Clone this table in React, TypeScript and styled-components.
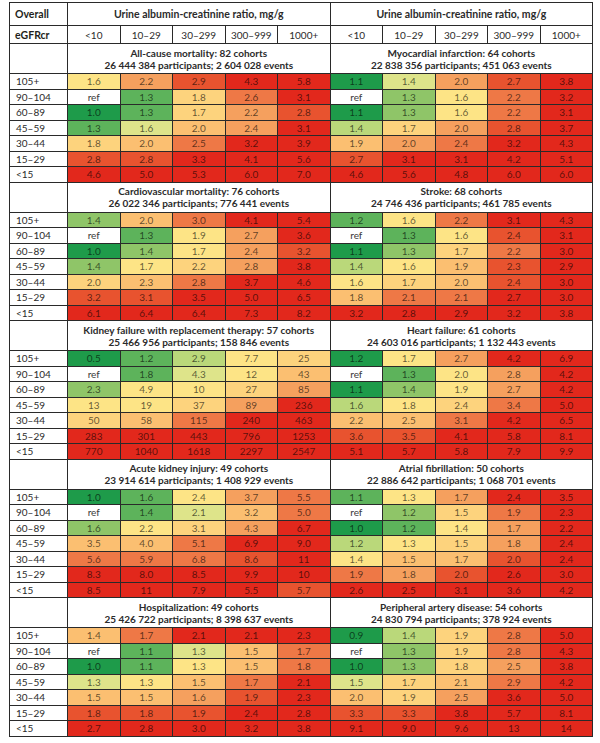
import React from 'react';
import styled, { createGlobalStyle } from 'styled-components';

const GlobalStyle = createGlobalStyle`
  html, body {
    margin: 0;
    padding: 0;
    background: #fff;
  }
  body {
    font-family: Lato, "Liberation Sans", Arial, sans-serif;
    color: #231f20;
  }
`;

// heat map classes, green -> red
const palette: Record<string, string> = {
  w: '#ffffff',
  g: '#1e9b4a',
  m: '#5db35b',
  n: '#8fc568',
  l: '#bad87a',
  k: '#dee48a',
  y: '#fde486',
  a: '#fdd37d',
  o: '#fbbf71',
  p: '#f5a05e',
  q: '#ee7846',
  s: '#e8532f',
  r: '#e2281c',
};

const bands = ['<10', '10–29', '30–299', '300–999', '1000+'];
const egfr = ['105+', '90–104', '60–89', '45–59', '30–44', '15–29', '<15'];

interface Block {
  title: string;
  sub: string;
  rows: string[];
}

const left: Block[] = [
  {
    title: 'All-cause mortality: 82 cohorts',
    sub: '26 444 384 participants; 2 604 028 events',
    rows: [
      '1.6y 2.2p 2.9s 4.3r 5.8r',
      'refw 1.3m 1.8a 2.6q 3.1r',
      '1.0g 1.3m 1.7a 2.2p 2.8s',
      '1.3m 1.6k 2.0o 2.4p 3.1r',
      '1.8a 2.0o 2.5q 3.2r 3.9r',
      '2.8s 2.8s 3.3r 4.1r 5.6r',
      '4.6r 5.0r 5.3r 6.0r 7.0r',
    ],
  },
  {
    title: 'Cardiovascular mortality: 76 cohorts',
    sub: '26 022 346 participants; 776 441 events',
    rows: [
      '1.4n 2.0o 3.0q 4.1r 5.4r',
      'refw 1.3m 1.9y 2.7p 3.6r',
      '1.0g 1.4n 1.7y 2.4p 3.2s',
      '1.4n 1.7y 2.2a 2.8p 3.8r',
      '2.0a 2.3o 2.8q 3.7r 4.6r',
      '3.2s 3.1s 3.5r 5.0r 6.5r',
      '6.1r 6.4r 6.4r 7.3r 8.2r',
    ],
  },
  {
    title: 'Kidney failure with replacement therapy: 57 cohorts',
    sub: '25 466 956 participants; 158 846 events',
    rows: [
      '0.5g 1.2m 2.9l 7.7y 25a',
      'refw 1.8m 4.3k 12y 43o',
      '2.3n 4.9y 10y 27a 85p',
      '13y 19y 37a 89p 236r',
      '50a 58o 115q 240r 463r',
      '283r 301r 443r 796r 1253r',
      '770r 1040r 1618r 2297r 2547r',
    ],
  },
  {
    title: 'Acute kidney injury: 49 cohorts',
    sub: '23 914 614 participants; 1 408 929 events',
    rows: [
      '1.0g 1.6m 2.4y 3.7p 5.5q',
      'refw 1.4m 2.1k 3.2o 5.0q',
      '1.6n 2.2y 3.1a 4.3p 6.7r',
      '3.5o 4.0o 5.1q 6.9r 9.0r',
      '5.6q 5.9q 6.8q 8.6s 11r',
      '8.3r 8.0r 8.5r 9.9r 10r',
      '8.5r 11r 7.9r 5.5r 5.7s',
    ],
  },
  {
    title: 'Hospitalization: 49 cohorts',
    sub: '25 426 722 participants; 8 398 637 events',
    rows: [
      '1.4o 1.7q 2.1r 2.1r 2.3r',
      'refw 1.1m 1.3k 1.5o 1.7q',
      '1.0g 1.1m 1.3y 1.5o 1.8q',
      '1.3k 1.3y 1.5o 1.7q 2.1r',
      '1.5o 1.5o 1.6p 1.9s 2.3r',
      '1.8s 1.8s 1.9s 2.4r 2.8r',
      '2.7r 2.8r 3.0r 3.2r 3.8r',
    ],
  },
];

const right: Block[] = [
  {
    title: 'Myocardial infarction: 64 cohorts',
    sub: '22 838 356 participants; 451 063 events',
    rows: [
      '1.1g 1.4k 2.0p 2.7s 3.8r',
      'refw 1.3n 1.6y 2.2q 3.2r',
      '1.1g 1.3n 1.6y 2.2q 3.1r',
      '1.4l 1.7a 2.0p 2.8s 3.7r',
      '1.9o 2.0p 2.4q 3.2r 4.3r',
      '2.7s 3.1r 3.1r 4.2r 5.1r',
      '4.6r 5.6r 4.8r 6.0r 6.0r',
    ],
  },
  {
    title: 'Stroke: 68 cohorts',
    sub: '24 746 436 participants; 461 785 events',
    rows: [
      '1.2m 1.6y 2.2q 3.1r 4.3r',
      'refw 1.3m 1.6y 2.4s 3.1r',
      '1.1g 1.3n 1.7a 2.2q 3.0r',
      '1.4l 1.6y 1.9o 2.3s 2.9r',
      '1.6y 1.7a 2.0o 2.4s 3.0r',
      '1.8o 2.1q 2.1q 2.7r 3.0r',
      '3.2r 2.8r 2.9r 3.2r 3.8r',
    ],
  },
  {
    title: 'Heart failure: 61 cohorts',
    sub: '24 603 016 participants; 1 132 443 events',
    rows: [
      '1.2g 1.7y 2.7p 4.2r 6.9r',
      'refw 1.3m 2.0y 2.8p 4.2r',
      '1.1g 1.4n 1.9y 2.7p 4.2r',
      '1.6l 1.8y 2.4a 3.4q 5.0r',
      '2.2o 2.5o 3.1q 4.2r 6.5r',
      '3.6s 3.5s 4.1r 5.8r 8.1r',
      '5.1r 5.7r 5.8r 7.9r 9.9r',
    ],
  },
  {
    title: 'Atrial fibrillation: 50 cohorts',
    sub: '22 886 642 participants; 1 068 701 events',
    rows: [
      '1.1m 1.3y 1.7p 2.4r 3.5r',
      'refw 1.2n 1.5a 1.9q 2.3r',
      '1.0g 1.2m 1.4y 1.7p 2.2r',
      '1.2l 1.3y 1.5a 1.8p 2.4r',
      '1.4y 1.5o 1.7o 2.0s 2.4r',
      '1.9q 1.8p 2.0s 2.6r 3.0r',
      '2.6r 2.5r 3.1r 3.6r 4.2r',
    ],
  },
  {
    title: 'Peripheral artery disease: 54 cohorts',
    sub: '24 830 794 participants; 378 924 events',
    rows: [
      '0.9g 1.4l 1.9a 2.8q 5.0r',
      'refw 1.3n 1.9a 2.8q 4.3r',
      '1.0g 1.3n 1.8a 2.5p 3.8r',
      '1.5k 1.7a 2.1o 2.9q 4.2r',
      '2.0o 1.9a 2.5p 3.6r 5.0r',
      '3.3s 3.3s 3.8r 5.7r 8.1r',
      '9.1r 9.0r 9.6r 13r 14r',
    ],
  },
];

const parse = (row: string) =>
  row.split(' ').map((t) => ({ value: t.slice(0, -1), code: t.slice(-1) }));

const Page = styled.div`
  padding: 2px 0 0 9px;
`;

const Grid = styled.table`
  border-collapse: collapse;
  table-layout: fixed;
  width: 583px;
  border: 1.5px solid #222;
  font-size: 10px;
`;

const Row = styled.tr<{ $h: number }>`
  height: ${(p) => p.$h}px;
`;

const Corner = styled.th`
  border: 1px solid #2a2a2a;
  padding: 0 0 0 5px;
  text-align: left;
  font-weight: 700;
  font-size: 10.5px;
  color: #231f20;
`;

const GroupHead = styled.th`
  border: 1px solid #2a2a2a;
  padding: 0;
  text-align: center;
  font-weight: 700;
  font-size: 10.5px;
  color: #2b2b2b;
`;

const BandHead = styled.th`
  border: 1px solid #2a2a2a;
  padding: 0;
  text-align: center;
  font-weight: 400;
  font-size: 10px;
  color: #2b2b2b;
`;

const Blank = styled.td`
  border: 1px solid #2a2a2a;
`;

const TitleCell = styled.td`
  border: 1px solid #2a2a2a;
  padding: 0;
  text-align: center;
  font-weight: 700;
  font-size: 10px;
  line-height: 12px;
  color: #2b2b2b;
  background: #fff;
`;

const RowLabel = styled.td`
  border: 1px solid #2a2a2a;
  padding: 0 0 0 6px;
  text-align: left;
  font-size: 10px;
  color: #2b2b2b;
  line-height: 1;
`;

const Value = styled.td<{ $bg: string; $ref: boolean }>`
  border: 1px solid #2a2a2a;
  padding: 0;
  text-align: center;
  font-size: 10px;
  line-height: 1;
  background: ${(p) => p.$bg};
  color: ${(p) => (p.$ref ? '#3a3a3a' : 'rgba(0, 0, 0, 0.62)')};
`;

function BlockRows({ l, r }: { l: Block; r: Block }) {
  const lr = l.rows.map(parse);
  const rr = r.rows.map(parse);
  return (
    <>
      <Row $h={30}>
        <Blank />
        <TitleCell colSpan={5}>
          {l.title}
          <br />
          {l.sub}
        </TitleCell>
        <TitleCell colSpan={5}>
          {r.title}
          <br />
          {r.sub}
        </TitleCell>
      </Row>
      {egfr.map((label, i) => (
        <Row $h={15.5} key={label}>
          <RowLabel>{label}</RowLabel>
          {[...lr[i], ...rr[i]].map((c, j) => (
            <Value key={j} $bg={palette[c.code]} $ref={c.code === 'w'}>
              {c.value}
            </Value>
          ))}
        </Row>
      ))}
    </>
  );
}

export default function App() {
  return (
    <Page>
      <GlobalStyle />
      <Grid>
        <colgroup>
          <col style={{ width: 58 }} />
          {Array.from({ length: 10 }).map((_, i) => (
            <col key={i} style={{ width: 52.5 }} />
          ))}
        </colgroup>
        <tbody>
          <Row $h={23}>
            <Corner>Overall</Corner>
            <GroupHead colSpan={5}>Urine albumin-creatinine ratio, mg/g</GroupHead>
            <GroupHead colSpan={5}>Urine albumin-creatinine ratio, mg/g</GroupHead>
          </Row>
          <Row $h={18}>
            <Corner>eGFRcr</Corner>
            {[...bands, ...bands].map((b, i) => (
              <BandHead key={i}>{b}</BandHead>
            ))}
          </Row>
          {left.map((l, i) => (
            <BlockRows key={l.title} l={l} r={right[i]} />
          ))}
        </tbody>
      </Grid>
    </Page>
  );
}
